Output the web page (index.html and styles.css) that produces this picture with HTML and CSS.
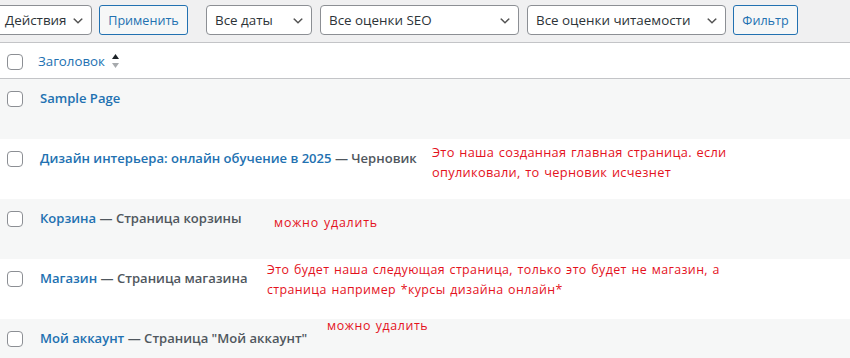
FILE: index.html
```html
<!DOCTYPE html>
<html lang="ru">
<head>
<meta charset="utf-8">
<title>Страницы</title>
<link rel="stylesheet" href="styles.css">
</head>
<body>
<div class="toolbar">
  <div class="select sel-actions">Действия</div>
  <button class="btn btn-apply">Применить</button>
  <div class="select sel-dates">Все даты</div>
  <div class="select sel-seo">Все оценки SEO</div>
  <div class="select sel-read">Все оценки читаемости</div>
  <button class="btn btn-filter">Фильтр</button>
</div>
<div class="table">
  <div class="head">
    <div class="cb"><span class="box"></span></div>
    <div class="col-title">
      <span class="head-link">Заголовок</span>
      <svg class="sort" width="9" height="16" viewBox="0 0 9 16"><path d="M1 6 L4.5 1 L8 6 Z" fill="#1d2327"/><path d="M1 10 L4.5 15 L8 10 Z" fill="#a7aaad"/></svg>
    </div>
  </div>
  <div class="row alt">
    <div class="cb"><span class="box"></span></div>
    <div class="title"><a class="link">Sample Page</a></div>
  </div>
  <div class="row">
    <div class="cb"><span class="box"></span></div>
    <div class="title"><a class="link">Дизайн интерьера: онлайн обучение в 2025</a> — Черновик</div>
  </div>
  <div class="row alt">
    <div class="cb"><span class="box"></span></div>
    <div class="title"><a class="link">Корзина</a> — Страница корзины</div>
  </div>
  <div class="row">
    <div class="cb"><span class="box"></span></div>
    <div class="title"><a class="link">Магазин</a> — Страница магазина</div>
  </div>
  <div class="row alt last">
    <div class="cb"><span class="box"></span></div>
    <div class="title"><a class="link">Мой аккаунт</a> — Страница "Мой аккаунт"</div>
  </div>
</div>
<div class="note note1">Это наша созданная главная страница. если<br>опуликовали, то черновик исчезнет</div>
<div class="note note2">можно удалить</div>
<div class="note note3">Это будет наша следующая страница, только это будет не магазин, а<br>страница например *курсы дизайна онлайн*</div>
<div class="note note4">можно удалить</div>
</body>
</html>
```
FILE: styles.css
```css
html, body {
  margin: 0;
  padding: 0;
}
body {
  width: 850px;
  height: 358px;
  overflow: hidden;
  background: #f0f0f1;
  font-family: "Open Sans", "Noto Sans", sans-serif;
  color: #50575e;
  position: relative;
}
.toolbar {
  height: 42px;
  box-sizing: border-box;
  padding-top: 5px;
  display: flex;
  align-items: flex-start;
  margin-left: -4px;
}
.select {
  box-sizing: border-box;
  height: 30px;
  border: 1px solid #8c8f94;
  border-radius: 4px;
  background: #fff url("data:image/svg+xml;utf8,<svg xmlns='http://www.w3.org/2000/svg' width='20' height='20' viewBox='0 0 20 20'><path d='M5 6l5 5 5-5 2 1-7 7-7-7 2-1z' fill='%23555'/></svg>") no-repeat right 6px top 56%;
  background-size: 14px 14px;
  font-size: 13.4px;
  line-height: 28px;
  color: #2c3338;
  padding-left: 8px;
}
.sel-actions { width: 96px; }
.sel-dates { width: 106px; margin-left: 18px; }
.sel-seo { width: 199px; margin-left: 8px; }
.sel-read { width: 199px; margin-left: 8px; }
.btn {
  box-sizing: border-box;
  height: 30px;
  border: 1px solid #2271b1;
  border-radius: 3px;
  background: #f6f7f7;
  color: #2271b1;
  font-family: inherit;
  font-size: 12.6px;
  padding: 0;
  text-align: center;
}
.btn-apply { width: 89px; margin-left: 7px; }
.btn-filter { width: 65px; margin-left: 7px; }
.table {
  border-top: 1px solid #c3c4c7;
  background: #fff;
}
.head {
  height: 35px;
  border-bottom: 1px solid #c3c4c7;
  display: flex;
  background: #fff;
}
.cb {
  width: 32px;
  flex: none;
}
.box {
  display: block;
  box-sizing: border-box;
  width: 16px;
  height: 16px;
  border: 1px solid #8c8f94;
  border-radius: 4px;
  background: #fff;
  margin-left: 7px;
}
.head .box { margin-top: 11px; }
.col-title {
  padding-left: 6px;
  display: flex;
  align-items: flex-start;
  padding-top: 8px;
}
.head-link {
  font-size: 13.3px;
  line-height: 20px;
  color: #2271b1;
}
.sort {
  margin-left: 6px;
  margin-top: 2px;
}
.row {
  height: 60px;
  display: flex;
  background: #fff;
}
.row.alt { background: #f6f7f7; }
.row.last { height: 39px; }
.row .box { margin-top: 12px; }
.title {
  padding-left: 8px;
  padding-top: 9px;
  font-size: 13.05px;
  line-height: 20px;
  font-weight: 600;
  color: #50575e;
  white-space: nowrap;
}
.link { color: #2271b1; }
.note {
  position: absolute;
  color: #e4121d;
  font-family: "Open Sans", "Noto Sans", sans-serif;
  font-size: 12.4px;
  line-height: 20px;
  letter-spacing: 0.6px;
  word-spacing: 1px;
  white-space: nowrap;
}
.note1 { left: 432px; top: 142px; font-size: 12.8px; letter-spacing: 0.3px; }
.note2 { left: 274px; top: 213px; letter-spacing: 0.8px; }
.note3 { left: 267px; top: 260px; letter-spacing: 0.4px; }
.note4 { left: 327px; top: 316px; }
```
